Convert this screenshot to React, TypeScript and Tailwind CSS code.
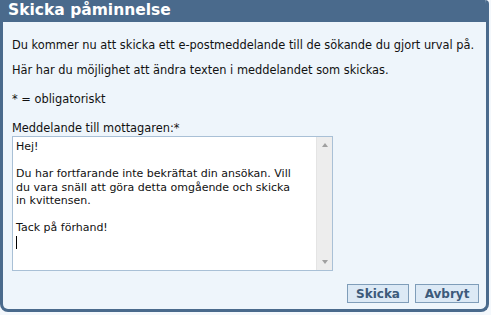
import React from 'react'

const font = { fontFamily: 'Verdana, "DejaVu Sans", sans-serif' }

/* ── Fake scrollbar on the message box ── */
const ScrollTrack = () => (
  <div className="flex w-[16px] flex-col items-center justify-between border-l border-[#e4e4e4] bg-[#ededed]">
    <svg width="16" height="16" viewBox="0 0 16 16">
      <path d="M5 10 L8 6 L11 10 Z" fill="#a0a0a0" />
    </svg>
    <svg width="16" height="16" viewBox="0 0 16 16">
      <path d="M5 6 L8 10 L11 6 Z" fill="#a0a0a0" />
    </svg>
  </div>
)

export default function App() {
  return (
    <div className="h-[315px] w-[491px] bg-[#f4f8fc]" style={font}>
      <div className="flex h-[312px] w-[489px] flex-col overflow-hidden rounded-tr-[4px] rounded-b-[8px] border-x-[3px] border-b-[3px] border-[#4a6a8c] bg-[#eef5fb]">
        {/* Header */}
        <div className="flex h-[22px] items-center bg-[#4a6a8c] px-[5px]">
          <span className="text-[15.5px] font-bold text-white">Skicka påminnelse</span>
        </div>

        {/* Body */}
        <div className="flex flex-1 flex-col pl-[9px] pr-[7px] pt-[16px] text-[11.4px] text-[#111]">
          <p className="leading-[14px]">Du kommer nu att skicka ett e-postmeddelande till de sökande du gjort urval på.</p>
          <p className="mt-[11px] leading-[14px]">Här har du möjlighet att ändra texten i meddelandet som skickas.</p>
          <p className="mt-[15px] leading-[14px]">* = obligatoriskt</p>
          <p className="mt-[15px] leading-[14px]">Meddelande till mottagaren:*</p>

          <div className="mt-[1px] flex h-[135px] w-[321px] border border-[#a9c0d6] bg-white text-[11px]">
            <div className="flex-1 px-[3px] pt-[3px] leading-[13.5px]">
              <div>Hej!</div>
              <div className="h-[13.5px]" />
              <div>Du har fortfarande inte bekräftat din ansökan. Vill</div>
              <div>du vara snäll att göra detta omgående och skicka</div>
              <div>in kvittensen.</div>
              <div className="h-[13.5px]" />
              <div>Tack på förhand!</div>
              <div className="mt-[1px] h-[13px] w-px bg-black" />
            </div>
            <ScrollTrack />
          </div>

          {/* Actions */}
          <div className="mt-auto mb-[6px] flex justify-end gap-[6px]">
            <button className="h-[19px] w-[62px] border border-[#7f9db9] bg-[#dce9f5] text-[12px] font-bold text-[#3c5a7a]">Skicka</button>
            <button className="h-[19px] w-[64px] border border-[#7f9db9] bg-[#dce9f5] text-[12px] font-bold text-[#3c5a7a]">Avbryt</button>
          </div>
        </div>
      </div>
    </div>
  )
}
